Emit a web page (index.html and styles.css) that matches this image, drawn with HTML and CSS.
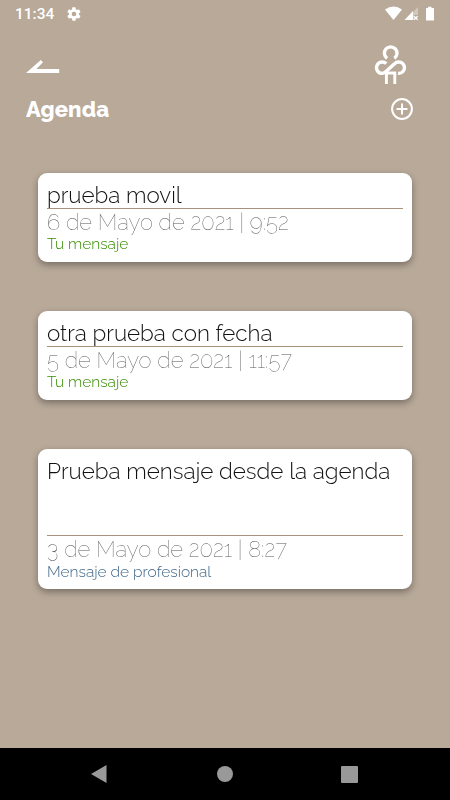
FILE: index.html
```html
<!DOCTYPE html>
<html lang="es">
<head>
<meta charset="utf-8">
<title>Agenda</title>
<link rel="stylesheet" href="styles.css">
</head>
<body>
<div class="status">
  <span class="clock">11:34</span>
  <svg class="gear" width="16" height="16" viewBox="0 0 24 24"><path fill="#fff" d="M19.4 13a7.500 7.500 0 0 0 0-2l2.100-1.600c.2-.2.200-.4.100-.6l-2-3.500c-.1-.2-.4-.3-.6-.2l-2.500 1a7.300 7.300 0 0 0-1.700-1l-.4-2.600A.5.500 0 0 0 13.900 2h-4a.5.500 0 0 0-.5.400L9 5.100c-.6.200-1.200.6-1.700 1l-2.500-1c-.2-.1-.5 0-.6.200l-2 3.500c-.1.200-.1.500.1.600L4.500 11a7.500 7.500 0 0 0 0 2l-2.200 1.600c-.2.200-.2.400-.1.600l2 3.500c.1.200.4.300.6.200l2.500-1c.5.400 1.100.7 1.700 1l.4 2.600c0 .3.200.5.500.5h4c.3 0 .5-.2.500-.4l.4-2.700c.6-.2 1.200-.6 1.700-1l2.500 1c.2.100.5 0 .6-.2l2-3.500c.1-.2.100-.5-.1-.6zM12 15.500a3.500 3.500 0 1 1 0-7 3.500 3.500 0 0 1 0 7z"/></svg>
  <svg class="signals" width="50" height="16" viewBox="0 0 50 16"><path fill="#fff" d="M0 3.500Q8.500-2.500 17 3.500L8.500 14z"/><path fill="#fff" opacity=".35" d="M33 1v8h-4v5H20z"/><path fill="#fff" d="M28 5v9h-8.500z"/><path stroke="#fff" stroke-width="1.300" d="m29 10.200 3.600 3.600m0-3.600-3.600 3.600"/><path fill="#fff" d="M41 2h2V.8h3.500V2H49v12.500h-8z"/></svg>
</div>
<header class="top">
  <svg class="back" width="34" height="14" viewBox="0 0 34 14"><path fill="#fff" d="M14.800 0 17 2.200 10.500 9h22.700v4H0z"/></svg>
  <svg class="logo" width="34" height="40" viewBox="0 0 34 40"><g fill="none" stroke="#fff" stroke-width="3.400"><path d="M14.100 13.300A6.300 6.300 0 1 1 21.300 13.300"/><path d="M13.200 18.600A5.700 5.700 0 1 0 9.300 28.400Q11.200 28.200 13 26.400L21.500 18.800A5.700 5.700 0 1 1 25 28.300"/><path stroke-width="2.900" d="M13.400 39V28H21.800V39"/></g></svg>
</header>
<div class="heading">
  <h1>Agenda</h1>
  <svg width="22" height="22" viewBox="0 0 22 22"><g fill="none" stroke="#fff" stroke-width="2"><circle cx="11" cy="11" r="9.900"/><path d="M11 5.500v11M5.500 11h11"/></g></svg>
</div>
<main>
  <article><h2>prueba movil</h2><p class="date">6 de Mayo de 2021 | 9:52</p><p class="who">Tu mensaje</p></article>
  <article><h2>otra prueba con fecha</h2><p class="date">5 de Mayo de 2021 | 11:57</p><p class="who">Tu mensaje</p></article>
  <article><h2 class="tall">Prueba mensaje desde la agenda</h2><p class="date">3 de Mayo de 2021 | 8:27</p><p class="who pro">Mensaje de profesional</p></article>
</main>
<nav>
  <svg width="16" height="18" viewBox="0 0 16 18"><path fill="#999" d="M0 9 15.500 0v18z"/></svg>
  <svg class="home" width="16" height="16" viewBox="0 0 16 16"><circle cx="8" cy="8" r="8" fill="#999"/></svg>
  <svg width="17" height="17" viewBox="0 0 17 17"><rect width="17" height="17" rx="1" fill="#999"/></svg>
</nav>
</body>
</html>
```
FILE: styles.css
```css
* { box-sizing: border-box; margin: 0; padding: 0; }
body { width: 450px; height: 800px; overflow: hidden; background: #b8a999; font-family: Raleway, Lato, sans-serif; display: flex; flex-direction: column; }
svg { display: block; flex: none; }
.status { height: 28px; display: flex; align-items: center; padding: 0 15px; color: #fff; font: 500 15.500px/28px Roboto, sans-serif; }
.clock { width: 51px; }
.signals { margin-left: auto; }
.top { height: 62px; display: flex; justify-content: space-between; padding: 17px 43px 0 26px; }
.back { margin-top: 15px; }
.heading { height: 83px; display: flex; justify-content: space-between; padding: 8px 37px 0 26px; }
h1 { color: #fff; font-size: 22px; line-height: 22px; font-weight: 800; letter-spacing: .1px; }
main { flex: 1; padding: 0 38px; display: flex; flex-direction: column; gap: 49px; will-change: transform; }
article { background: #fff; border-radius: 9px; padding: 9px; height: 89px; box-shadow: 0 3px 7px rgba(0,0,0,.35); white-space: nowrap; }
article:last-child { height: 140px; }
h2 { height: 27px; border-bottom: 1px solid #a9927b; color: #111; font-size: 22.400px; line-height: 26px; font-weight: 300; }
.tall { height: 78px; }
.date { color: #555; font-size: 22.100px; line-height: 26px; height: 26px; font-weight: 100; }
.who { color: #388e00; font-size: 15.500px; line-height: 18px; font-weight: 350; }
.pro { color: #42688a; line-height: 20px; }
nav { height: 52px; background: #000; display: flex; justify-content: space-between; align-items: center; padding: 0 92px 0 91px; }
.home { margin-left: 1px; }
```
